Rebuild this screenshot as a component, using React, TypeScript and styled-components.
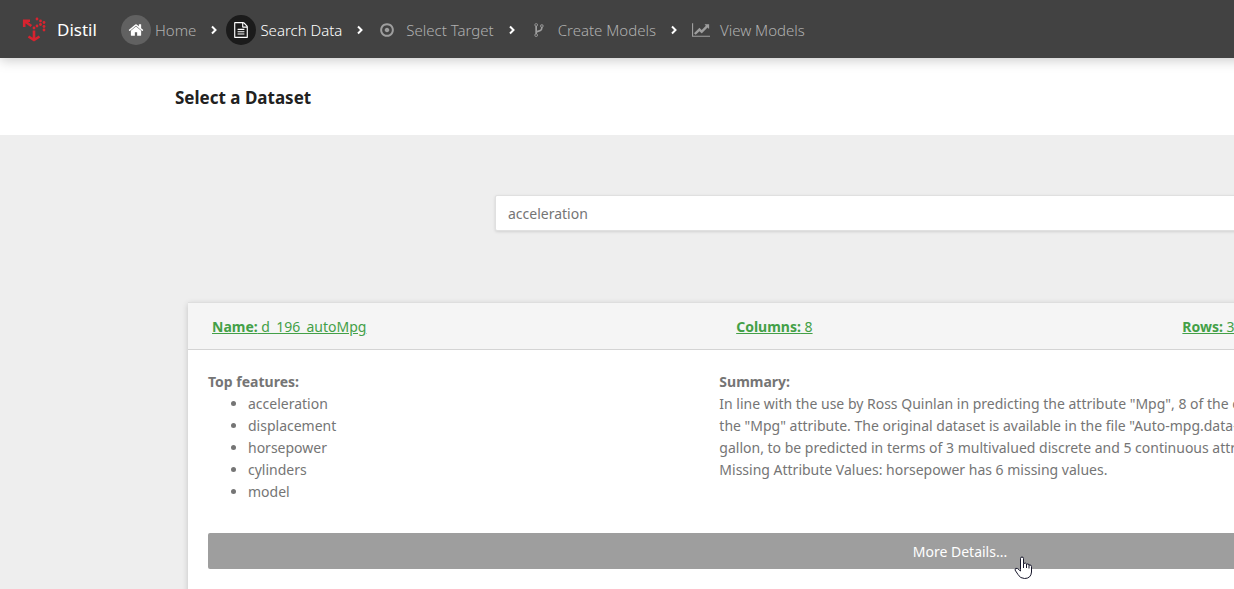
import React from "react";
import styled, { createGlobalStyle } from "styled-components";

const GlobalStyle = createGlobalStyle`
  *, *::before, *::after { box-sizing: border-box; }
  html { overflow-x: hidden; }
  body {
    margin: 0;
    background: #eeeeee;
    color: #757575;
    font-family: "Noto Sans", "Segoe UI", sans-serif;
    font-size: 14px;
    font-weight: 400;
    line-height: 22px;
  }
`;

const Page = styled.div`
  min-width: 1920px;
`;

const NavBar = styled.header`
  position: relative;
  display: flex;
  align-items: center;
  height: 58px;
  padding: 1px 22px 0;
  background: #424242;
  box-shadow: 0 2px 12px rgba(0, 0, 0, 0.22);
`;

const Brand = styled.a`
  display: flex;
  align-items: center;
  gap: 11px;
  width: 99px;
  color: #ffffff;
  font-size: 17px;
  text-decoration: none;
`;

const LogoMark = styled.svg`
  width: 24px;
  height: 26px;
  fill: #d8232f;
`;

const Steps = styled.nav`
  display: flex;
  align-items: center;
  font-size: 15px;
  font-weight: 300;
`;

const Step = styled.a<{ $active?: boolean }>`
  display: flex;
  align-items: center;
  gap: 4px;
  color: ${(p) => (p.$active ? "#ffffff" : "#b0b0b0")};
  text-decoration: none;
  white-space: nowrap;
`;

const badgeColors = { home: "#616161", active: "#1b1b1b", none: "transparent" };

const StepBadge = styled.span<{ $tone: keyof typeof badgeColors }>`
  display: flex;
  align-items: center;
  justify-content: center;
  width: 30px;
  height: 30px;
  border-radius: 50%;
  background: ${(p) => badgeColors[p.$tone]};
  color: ${(p) => (p.$tone === "none" ? "#9e9e9e" : "#ffffff")};
`;

const Separator = styled.svg`
  width: 6px;
  height: 10px;
  margin: 0 9px 0 15px;
  fill: none;
  stroke: #ffffff;
  stroke-width: 2;
`;

const Glyph = styled.svg`
  height: 16px;
  fill: currentColor;
`;

const TitleBar = styled.div`
  height: 77px;
  padding: 29px 175px 0;
  background: #ffffff;
`;

const Title = styled.h1`
  margin: 0;
  color: #212121;
  font-size: 17px;
  font-weight: 700;
  line-height: 22px;
`;

const SearchRow = styled.form`
  display: flex;
  justify-content: center;
  padding: 60px 0 71px;
`;

const SearchInput = styled.input`
  width: 930px;
  height: 36px;
  padding: 0 12px;
  border: 1px solid #e0e0e0;
  border-radius: 2px;
  background: #ffffff;
  box-shadow: 0 1px 3px rgba(0, 0, 0, 0.12);
  color: #757575;
  font: inherit;
`;

const Card = styled.article`
  margin: 0 188px;
  padding-bottom: 20px;
  background: #ffffff;
  box-shadow: 0 2px 6px rgba(0, 0, 0, 0.18);
`;

const CardHeader = styled.div`
  display: flex;
  align-items: center;
  justify-content: space-between;
  height: 48px;
  padding: 2px 24px 0;
  border-top: 1px solid #dedede;
  border-bottom: 1px solid #d4d4d4;
  background: #f5f5f5;
`;

const Fact = styled.a`
  color: #43a047;
  text-decoration: underline;
`;

const CardBody = styled.div`
  display: grid;
  grid-template-columns: repeat(3, 1fr);
  column-gap: 30px;
  row-gap: 30px;
  padding: 21px 20px 20px;
`;

const Label = styled.h2`
  margin: 0;
  font-size: inherit;
  font-weight: 700;
  line-height: inherit;
`;

const Summary = styled.section`
  grid-column: span 2;
  white-space: pre-line;
`;

const SummaryText = styled.p`
  margin: 0;
`;

const FeatureList = styled.ul`
  margin: 0;
  padding-left: 40px;
`;

const MoreButton = styled.button`
  grid-column: 1 / -1;
  height: 36px;
  padding: 2px 12px 0;
  border: 0;
  border-radius: 2px;
  background: #9e9e9e;
  color: #ffffff;
  font: inherit;
  cursor: pointer;
`;

const Pointer = styled.svg`
  position: absolute;
  left: 1014px;
  top: 556px;
  width: 18px;
  height: 24px;
`;

const HOME = "M1472 992v480q0 26-19 45t-45 19h-384v-384h-256v384h-384q-26 0-45-19t-19-45v-480q0-1 .5-3t.5-3l575-474 575 474q1 2 1 6zm223-69l-62 74q-8 9-21 11h-3q-13 0-21-7l-692-577-692 577q-12 8-24 7-13-2-21-11l-62-74q-8-10-7-23.5t11-21.5l719-599q32-26 76-26t76 26l244 204v-195q0-14 9-23t23-9h192q14 0 23 9t9 23v408l219 182q10 8 11 21.5t-7 23.5z";
const FILE = "M1596 380q28 28 48 76t20 88v1152q0 40-28 68t-68 28h-1344q-40 0-68-28t-28-68v-1600q0-40 28-68t68-28h896q40 0 88 20t76 48zm-444-244v376h376q-10-29-22-41l-313-313q-12-12-41-22zm384 1528v-1024h-416q-40 0-68-28t-28-68v-416h-768v1536h1280zm-1024-864q0-14 9-23t23-9h704q14 0 23 9t9 23v64q0 14-9 23t-23 9h-704q-14 0-23-9t-9-23v-64zm736 224q14 0 23 9t9 23v64q0 14-9 23t-23 9h-704q-14 0-23-9t-9-23v-64q0-14 9-23t23-9h704zm0 256q14 0 23 9t9 23v64q0 14-9 23t-23 9h-704q-14 0-23-9t-9-23v-64q0-14 9-23t23-9h704z";
const TARGET = "M1152 896q0 106-75 181t-181 75-181-75-75-181 75-181 181-75 181 75 75 181zm-256-544q-148 0-273 73t-198 198-73 273 73 273 198 198 273 73 273-73 198-198 73-273-73-273-198-198-273-73zm768 544q0 209-103 385.5t-279.5 279.5-385.5 103-385.5-103-279.5-279.5-103-385.5 103-385.5 279.5-279.5 385.5-103 385.5 103 279.5 279.5 103 385.5z";
const FORK = "M672 1472q0-40-28-68t-68-28-68 28-28 68 28 68 68 28 68-28 28-68zm0-1152q0-40-28-68t-68-28-68 28-28 68 28 68 68 28 68-28 28-68zm640 128q0-40-28-68t-68-28-68 28-28 68 28 68 68 28 68-28 28-68zm96 0q0 52-26 96.5t-70 69.5q-2 287-226 414-67 38-203 81-128 40-169.5 71t-41.5 100v26q44 25 70 69.5t26 96.5q0 80-56 136t-136 56-136-56-56-136q0-52 26-96.5t70-69.5v-820q-44-25-70-69.5t-26-96.5q0-80 56-136t136-56 136 56 56 136q0 52-26 96.5t-70 69.5v497q54-26 154-57 55-17 87.5-29.5t70.5-31 59-39.5 40.5-51 28-69.5 8.5-91.5q-44-25-70-69.5t-26-96.5q0-80 56-136t136-56 136 56 56 136z";
const CHART = "M2048 1536v128h-2048v-1536h128v1408h1920zm-128-1248v435q0 21-19.5 29.5t-35.5-7.5l-121-121-633 633q-10 10-23 10t-23-10l-233-233-416 416-192-192 585-585q10-10 23-10t23 10l233 233 464-464-121-121q-16-16-7.5-35.5t29.5-19.5h435q14 0 23 9t9 23z";

const Chevron = () => (
  <Separator viewBox="0 0 6 10" aria-hidden="true">
    <path d="M1 1.5l3.5 3.5-3.5 3.5" />
  </Separator>
);

const logoDots = [[15, 2], [18.5, 4], [22, 5.5], [18.5, 7.5], [15, 9], [22, 9.5], [22, 13], [12, 11]];

const Logo = () => (
  <LogoMark viewBox="0 0 24 26" aria-hidden="true">
    <path
      d="M8 3.8H2.2V10M2.2 3.8L9.3 9M12 13.5V22.5M6.5 19.5L12 23L17.5 19.5"
      fill="none"
      stroke="#d8232f"
      strokeWidth="2.6"
    />
    {logoDots.map(([x, y]) => <circle key={`${x}-${y}`} cx={x} cy={y} r="1.4" />)}
  </LogoMark>
);

const features = ["acceleration", "displacement", "horsepower", "cylinders", "model"];

const summary = `In line with the use by Ross Quinlan in predicting the attribute "Mpg", 8 of the original instances were removed because they had unknown values for
the "Mpg" attribute. The original dataset is available in the file "Auto-mpg.data-original". The data concerns city-cycle fuel consumption in miles per
gallon, to be predicted in terms of 3 multivalued discrete and 5 continuous attributes. Number of instances: 398. Number of attributes: 9.
Missing Attribute Values: horsepower has 6 missing values.`;

export default function App() {
  return (
    <Page>
      <GlobalStyle />
      <NavBar>
        <Brand href="#">
          <Logo />
          Distil
        </Brand>
        <Steps>
          <Step href="#home">
            <StepBadge $tone="home"><Glyph viewBox="0 0 1792 1792"><path d={HOME} /></Glyph></StepBadge>
            Home
          </Step>
          <Chevron />
          <Step href="#search" $active>
            <StepBadge $tone="active"><Glyph viewBox="0 0 1792 1792"><path d={FILE} /></Glyph></StepBadge>
            Search Data
          </Step>
          <Chevron />
          <Step href="#target">
            <StepBadge $tone="none"><Glyph viewBox="0 0 1792 1792"><path d={TARGET} /></Glyph></StepBadge>
            Select Target
          </Step>
          <Chevron />
          <Step href="#create">
            <StepBadge $tone="none"><Glyph viewBox="0 0 1792 1792"><path d={FORK} /></Glyph></StepBadge>
            Create Models
          </Step>
          <Chevron />
          <Step href="#view">
            <StepBadge $tone="none"><Glyph viewBox="0 0 2048 1792"><path d={CHART} /></Glyph></StepBadge>
            View Models
          </Step>
        </Steps>
      </NavBar>
      <TitleBar>
        <Title>Select a Dataset</Title>
      </TitleBar>
      <SearchRow>
        <SearchInput type="text" aria-label="Search datasets" defaultValue="acceleration" />
      </SearchRow>
      <Card>
        <CardHeader>
          <Fact href="#name"><b>Name:</b> d_196_autoMpg</Fact>
          <Fact href="#columns"><b>Columns:</b> 8</Fact>
          <Fact href="#rows"><b>Rows:</b> 398</Fact>
          <Fact href="#size"><b>Size:</b> 25.5 KiB</Fact>
        </CardHeader>
        <CardBody>
          <section>
            <Label>Top features:</Label>
            <FeatureList>
              {features.map((f) => <li key={f}>{f}</li>)}
            </FeatureList>
          </section>
          <Summary>
            <Label>Summary:</Label>
            <SummaryText>{summary}</SummaryText>
          </Summary>
          <MoreButton type="button">More Details...</MoreButton>
        </CardBody>
      </Card>
      <Pointer viewBox="0 0 18 24" aria-hidden="true">
        <path
          d="M6.5 13.5V2.5Q6.5 1 8 1T9.5 2.5V7.5Q12 6.5 12.5 8Q15 7.5 15 9Q17.5 8.5 17.5 10.5V16Q17 22.5 10.5 22.5Q6 22.5 4 18.5L1 14Q1 11.5 3.5 12.5L6.5 15Z"
          fill="#ffffff"
          stroke="#16162a"
        />
        <path d="M9.5 7.5V12M12.5 8V12M15 9V12.5" fill="none" stroke="#16162a" />
      </Pointer>
    </Page>
  );
}
